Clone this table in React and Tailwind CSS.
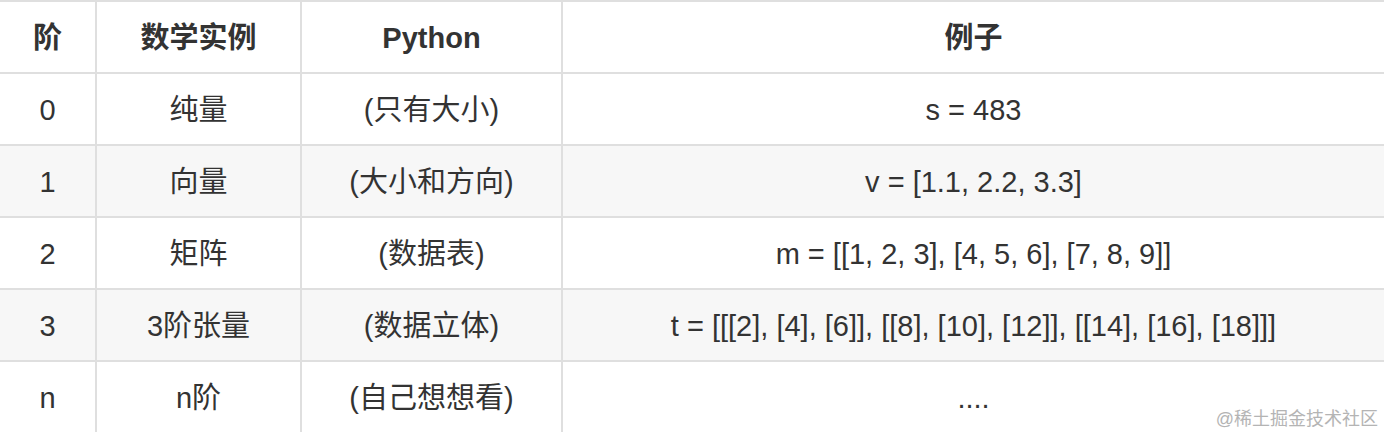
import React from 'react';

const rows = [
  { order: '0', math: '纯量', py: '(只有大小)', example: 's = 483' },
  { order: '1', math: '向量', py: '(大小和方向)', example: 'v = [1.1, 2.2, 3.3]' },
  { order: '2', math: '矩阵', py: '(数据表)', example: 'm = [[1, 2, 3], [4, 5, 6], [7, 8, 9]]' },
  { order: '3', math: '3阶张量', py: '(数据立体)', example: 't = [[[2], [4], [6]], [[8], [10], [12]], [[14], [16], [18]]]' },
  { order: 'n', math: 'n阶', py: '(自己想想看)', example: '....' },
];

const cell = 'h-[72px] border-t-2 border-[#dfdfdf] text-center align-middle px-0 pt-[3px] pb-0';

const App = () => {
  return (
    <div
      className="relative w-[1384px] h-[432px] overflow-hidden bg-white text-[#333] text-[29px]"
      style={{ fontFamily: '"Liberation Sans", "Noto Sans CJK SC", sans-serif' }}
    >
      <table className="w-full table-fixed border-separate border-spacing-0">
        <colgroup>
          <col className="w-[97px]" />
          <col className="w-[205px]" />
          <col className="w-[261px]" />
          <col />
        </colgroup>
        <thead>
          <tr className="bg-white">
            <th className={`${cell} border-r-2 font-bold`}>阶</th>
            <th className={`${cell} border-r-2 font-bold`}>数学实例</th>
            <th className={`${cell} border-r-2 font-bold`}>Python</th>
            <th className={`${cell} font-bold`}>例子</th>
          </tr>
        </thead>
        <tbody>
          {rows.map((row, i) => (
            <tr key={row.order} className={i % 2 === 1 ? 'bg-[#f7f7f7]' : 'bg-white'}>
              <td className={`${cell} border-r-2`}>{row.order}</td>
              <td className={`${cell} border-r-2`}>{row.math}</td>
              <td className={`${cell} border-r-2`}>{row.py}</td>
              <td className={cell}>{row.example}</td>
            </tr>
          ))}
        </tbody>
      </table>

      {/* watermark */}
      <div className="absolute right-[6px] bottom-[4px] text-[18px] leading-none text-[#b4b4b4]">
        @稀土掘金技术社区
      </div>
    </div>
  );
};

export default App;
